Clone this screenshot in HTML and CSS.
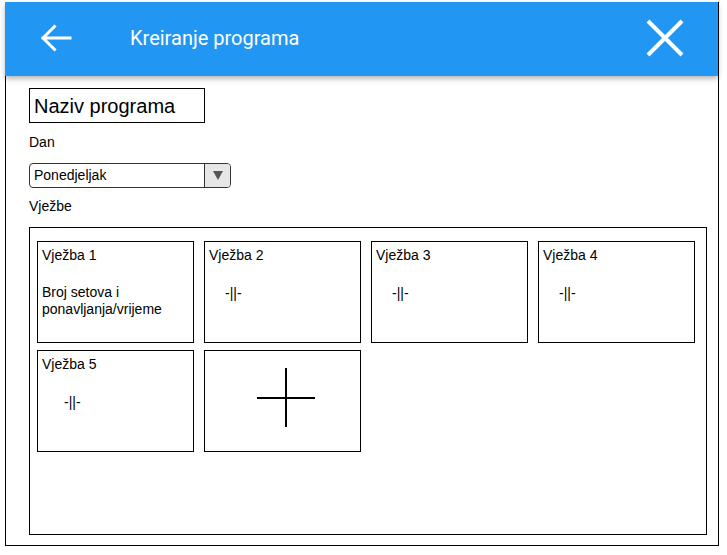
FILE: index.html
```html
<!DOCTYPE html>
<html>
<head>
<meta charset="utf-8">
<link rel="stylesheet" href="styles.css">
</head>
<body>
<div class="frame">
  <header class="appbar">
    <svg class="back" width="34" height="30" viewBox="0 0 34 30">
      <path d="M4 15 H31 M4 15 L15.5 3.5 M4 15 L15.5 26.5" fill="none" stroke="#fff" stroke-width="3" stroke-linecap="square"/>
    </svg>
    <div class="title">Kreiranje programa</div>
    <svg class="close" width="40" height="40" viewBox="0 0 40 40">
      <path d="M3 3 L37 37 M37 3 L3 37" fill="none" stroke="#fff" stroke-width="4"/>
    </svg>
  </header>
  <main class="content">
    <div class="name-input">Naziv programa</div>
    <div class="label label-dan">Dan</div>
    <div class="select">
      <span class="select-text">Ponedjeljak</span>
      <span class="select-btn"><span class="arrow"></span></span>
    </div>
    <div class="label label-vjezbe">Vježbe</div>
    <div class="exercises">
      <div class="grid">
        <div class="card">
          <div class="card-title">Vježba 1</div>
          <div class="card-desc">Broj setova i<br>ponavljanja/vrijeme</div>
        </div>
        <div class="card">
          <div class="card-title">Vježba 2</div>
          <div class="ditto">-||-</div>
        </div>
        <div class="card">
          <div class="card-title">Vježba 3</div>
          <div class="ditto">-||-</div>
        </div>
        <div class="card">
          <div class="card-title">Vježba 4</div>
          <div class="ditto">-||-</div>
        </div>
        <div class="card">
          <div class="card-title">Vježba 5</div>
          <div class="ditto ditto-wide">-||-</div>
        </div>
        <div class="card card-add">
          <svg width="60" height="60" viewBox="0 0 60 60">
            <path d="M0 30 H58 M29 0 V59" fill="none" stroke="#000" stroke-width="2"/>
          </svg>
        </div>
      </div>
    </div>
  </main>
</div>
</body>
</html>
```

FILE: styles.css
```css
html, body {
  margin: 0;
  padding: 0;
  background: #fff;
}

body {
  font-family: "Liberation Sans", Arial, sans-serif;
  color: #000;
}

.frame {
  margin: 2px 0 0 5px;
  width: 712px;
  height: 543px;
  border-left: 1px solid #000;
  border-right: 1px solid #000;
  border-bottom: 1px solid #000;
  display: flex;
  flex-direction: column;
}

.appbar {
  position: relative;
  margin-left: -1px;
  height: 74px;
  background: #2196f3;
  box-shadow: 0 3px 5px rgba(0, 0, 0, 0.28);
  display: flex;
  align-items: center;
  flex-shrink: 0;
  z-index: 1;
}

.back {
  margin-left: 34px;
  margin-top: -3px;
  display: block;
}

.title {
  margin-left: 57px;
  font-family: Roboto, "Noto Sans", sans-serif;
  font-size: 20px;
  color: #fff;
  flex: 1;
  margin-top: -3px;
}

.close {
  margin-right: 33px;
  margin-top: -3px;
  display: block;
}

.content {
  padding: 12px 0 0 23px;
  display: flex;
  flex-direction: column;
  align-items: flex-start;
}

.name-input {
  width: 170px;
  height: 33px;
  border: 1px solid #000;
  padding-left: 4px;
  font-size: 20px;
  line-height: 34px;
}

.label {
  font-size: 14px;
  line-height: 16px;
}

.label-dan {
  margin-top: 11px;
}

.select {
  margin-top: 13px;
  width: 200px;
  height: 23px;
  border: 1px solid #333;
  border-radius: 4px;
  display: flex;
  overflow: hidden;
}

.select-text {
  flex: 1;
  padding-left: 4px;
  font-size: 14px;
  line-height: 23px;
}

.select-btn {
  width: 25px;
  border-left: 1px solid #333;
  background: #e6e6e6;
  display: flex;
  align-items: center;
  justify-content: center;
}

.arrow {
  width: 0;
  height: 0;
  border-left: 5px solid transparent;
  border-right: 5px solid transparent;
  border-top: 9px solid #555;
}

.label-vjezbe {
  margin-top: 10px;
}

.exercises {
  margin-top: 13px;
  width: 678px;
  height: 308px;
  border: 1px solid #000;
  padding: 13px 0 0 7px;
  box-sizing: border-box;
}

.grid {
  display: grid;
  grid-template-columns: repeat(4, 157px);
  grid-auto-rows: 102px;
  column-gap: 10px;
  row-gap: 7px;
}

.card {
  border: 1px solid #000;
  box-sizing: border-box;
  padding: 5px 4px 0 4px;
  font-size: 14px;
  line-height: 17px;
}

.card-title {
  line-height: 17px;
}

.card-desc {
  margin-top: 20px;
}

.ditto {
  margin-top: 21px;
  padding-left: 16px;
}

.ditto-wide {
  padding-left: 22px;
}

.card-add {
  padding: 17px 0 0 52px;
}

.card-add svg {
  display: block;
}
```
